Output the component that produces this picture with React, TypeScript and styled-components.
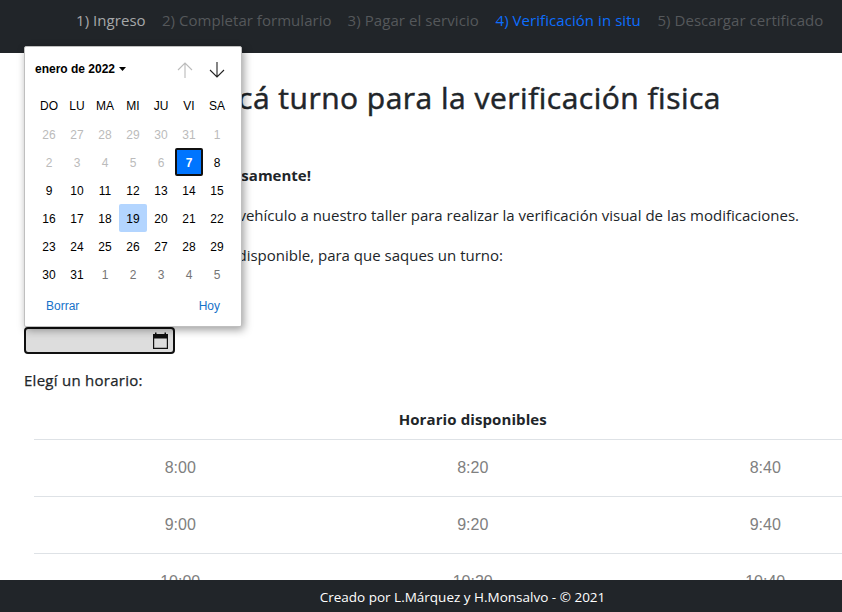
import React from "react";
import styled, { createGlobalStyle } from "styled-components";

const GlobalStyle = createGlobalStyle`
  * { box-sizing: border-box; }
  body { margin: 0; background: #fff; color: #212529; overflow: hidden; }
  h1, p { margin: 0; }
`;

const Page = styled.div`
  display: grid;
  grid-template-rows: 53px 527px 32px;
  width: 842px;
  height: 612px;
  overflow: hidden;
  font: 15px/24px "Open Sans", "Noto Sans", sans-serif;
`;

const Nav = styled.nav`
  display: flex;
  gap: 16px;
  padding: 8px 0 0 76px;
  background: #212529;
`;

const Step = styled.span<{ $color: string; $width: number; $spacing: number }>`
  flex: none;
  width: ${(p) => p.$width}px;
  color: ${(p) => p.$color};
  letter-spacing: ${(p) => p.$spacing}px;
  white-space: nowrap;
`;

const Main = styled.main`
  min-height: 0;
  padding-left: 24px;
`;

const Title = styled.h1`
  width: 697px;
  padding-top: 26px;
  height: 110px;
  text-align: right;
  font-size: 30px;
  line-height: 38px;
  font-weight: 500;
  letter-spacing: 0.49px;
  -webkit-text-stroke: 0.5px #212529;
  white-space: nowrap;
`;

const Line = styled.p<{ $width: number; $bold?: boolean }>`
  width: ${(p) => p.$width}px;
  height: 40px;
  text-align: right;
  font-weight: ${(p) => (p.$bold ? 700 : 400)};
  white-space: nowrap;
`;

const Field = styled.div`
  position: relative;
  margin-top: 44px;
  width: 151px;
  height: 27px;
`;

const DateInput = styled.div`
  display: flex;
  align-items: center;
  justify-content: flex-end;
  height: 27px;
  padding-right: 4px;
  border: 2px solid #101010;
  border-radius: 4px;
  background: #ddd;
`;

const Popup = styled.div`
  position: absolute;
  left: 0;
  bottom: 27px;
  width: 218px;
  height: 281px;
  border: 1px solid #bfbfbf;
  border-radius: 2px;
  background: #fff;
  box-shadow: 2px 3px 9px rgba(0, 0, 0, 0.38);
  font: 12px/28px "Liberation Sans", Arial, sans-serif;
  color: #000;
`;

const PopupHeader = styled.div`
  display: flex;
  align-items: center;
  height: 45px;
  padding: 0 16px 1px 10px;
  font-weight: 700;
`;

const Caret = styled.svg`
  margin: 0 auto 0 4px;
`;

const Arrow = styled.svg`
  margin: 2px 0 0 16px;
`;

const Days = styled.div`
  display: grid;
  grid-template-columns: repeat(7, 28px);
  grid-template-rows: 28px repeat(6, 28px);
  row-gap: 0;
  margin-left: 10px;
  text-align: center;
`;

const Weekdays = styled(Days)`
  grid-template-rows: 28px;
`;

type Kind = "normal" | "disabled" | "next" | "selected" | "hover";
const dayColors: Record<Kind, string> = {
  normal: "#000",
  disabled: "#bbb",
  next: "#757575",
  selected: "#fff",
  hover: "#000",
};

const Day = styled.span<{ $kind: Kind }>`
  color: ${(p) => dayColors[p.$kind]};
  border-radius: 2px;
  line-height: 30px;
  ${(p) => p.$kind === "selected" && "background: #0075ff; border: 2px solid #101010; font-weight: 700; line-height: 26px;"}
  ${(p) => p.$kind === "hover" && "background: #b3d5ff;"}
`;

const MonthDays = styled(Days)`
  grid-template-rows: repeat(6, 28px);
`;

const PopupFooter = styled.div`
  display: flex;
  justify-content: space-between;
  padding: 4px 21px 0;
  color: #1672c9;
`;

const Label = styled.p`
  margin-top: 14px;
  font-weight: 500;
  letter-spacing: 0.27px;
  -webkit-text-stroke: 0.25px #212529;
`;

const Table = styled.div`
  margin: 7px 0 0 10px;
  width: 877.5px;
`;

const TableTitle = styled.div`
  height: 41px;
  padding-top: 8px;
  border-bottom: 1px solid #dee2e6;
  text-align: center;
  font-weight: 700;
  letter-spacing: 0.1px;
`;

const Row = styled.div`
  display: grid;
  grid-template-columns: repeat(3, 1fr);
  height: 57px;
  border-bottom: 1px solid #dee2e6;
  text-align: center;
  font: 16px/56px "Liberation Sans", Arial, sans-serif;
  color: #808080;
`;

const Footer = styled.footer`
  position: relative;
  width: 925px;
  background: #212529;
  color: #fff;
  text-align: center;
  font-size: 13.5px;
  line-height: 34px;
`;

const steps = [
  { text: "1) Ingreso", color: "#a6a8a9", width: 70, spacing: 0.05 },
  { text: "2) Completar formulario", color: "#55585b", width: 169.5, spacing: 0.04 },
  { text: "3) Pagar el servicio", color: "#55585b", width: 132, spacing: 0.08 },
  { text: "4) Verificación in situ", color: "#0d6efd", width: 146, spacing: 0.06 },
  { text: "5) Descargar certificado", color: "#55585b", width: 167, spacing: 0.04 },
];

const weekdays = ["DO", "LU", "MA", "MI", "JU", "VI", "SA"];

const days = Array.from({ length: 42 }, (_, i) => {
  const offset = i - 5;
  const value = offset <= 0 ? offset + 31 : offset > 31 ? offset - 31 : offset;
  let kind: Kind = "normal";
  if (offset < 7) kind = "disabled";
  else if (offset === 7) kind = "selected";
  else if (offset === 19) kind = "hover";
  else if (offset > 31) kind = "next";
  return { value, kind };
});

const slots = [8, 9, 10].map((h) => [`${h}:00`, `${h}:20`, `${h}:40`]);

export default function App() {
  return (
    <Page>
      <GlobalStyle />
      <Nav>
        {steps.map((s) => (
          <Step key={s.text} $color={s.color} $width={s.width} $spacing={s.spacing}>
            {s.text}
          </Step>
        ))}
      </Nav>
      <Main>
        <Title>Sacá turno para la verificación fisica</Title>
        <Line $width={287} $bold>¡Leé cuidadosamente!</Line>
        <Line $width={775}>Traé tu vehículo a nuestro taller para realizar la verificación visual de las modificaciones.</Line>
        <Line $width={479}>Elegí un día disponible, para que saques un turno:</Line>
        <Field>
          <DateInput>
            <svg width="17" height="18" viewBox="0 0 17 18">
              <path d="M1 2h15v15H1zM2.2 6.5v9.3h12.6V6.5z" fill="#101010" fillRule="evenodd" />
              <path d="M3 0.5h1.5v2H3zM12.5 0.5H14v2h-1.5z" fill="#101010" />
            </svg>
          </DateInput>
          <Popup>
            <PopupHeader>
              enero de 2022
              <Caret width="7" height="4" viewBox="0 0 7 4">
                <path d="M0 0h7L3.5 4z" fill="#000" />
              </Caret>
              <Arrow width="16" height="16" viewBox="0 0 16 16" fill="none" stroke="#bbb" strokeWidth="1.1">
                <path d="M8 16V1M1 8l7-7 7 7" />
              </Arrow>
              <Arrow width="16" height="16" viewBox="0 0 16 16" fill="none" stroke="#222" strokeWidth="1.1">
                <path d="M8 0v15M1 8l7 7 7-7" />
              </Arrow>
            </PopupHeader>
            <Weekdays>
              {weekdays.map((d) => (
                <span key={d}>{d}</span>
              ))}
            </Weekdays>
            <MonthDays>
              {days.map((d, i) => (
                <Day key={i} $kind={d.kind}>
                  {d.value}
                </Day>
              ))}
            </MonthDays>
            <PopupFooter>
              <span>Borrar</span>
              <span>Hoy</span>
            </PopupFooter>
          </Popup>
        </Field>
        <Label>Elegí un horario:</Label>
        <Table>
          <TableTitle>Horario disponibles</TableTitle>
          {slots.map((row) => (
            <Row key={row[0]}>
              {row.map((t) => (
                <span key={t}>{t}</span>
              ))}
            </Row>
          ))}
        </Table>
      </Main>
      <Footer>Creado por L.Márquez y H.Monsalvo - © 2021</Footer>
    </Page>
  );
}
